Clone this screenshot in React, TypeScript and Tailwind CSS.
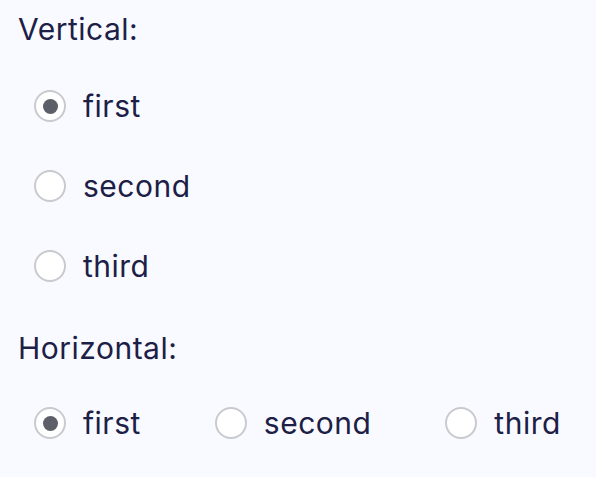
import { useState } from 'react'

const options = ['first', 'second', 'third']

function Radio({ label, checked, onSelect, className = '' }: { label: string; checked: boolean; onSelect: () => void; className?: string }) {
  return (
    <label className={`flex items-center cursor-pointer ${className}`} onClick={onSelect}>
      <span className="flex items-center justify-center w-[32px] h-[32px] rounded-full border-2 border-[#c9cacf] bg-white">
        {checked && <span className="w-[15px] h-[15px] rounded-full bg-[#5c5e68]" />}
      </span>
      <span className="ml-[17px]">{label}</span>
    </label>
  )
}

export default function App() {
  const [vertical, setVertical] = useState('first')
  const [horizontal, setHorizontal] = useState('first')

  return (
    <div
      className="min-h-[477px] bg-[#f9faff] pl-[18px] pt-[9px] text-[30px] tracking-[0.5px] text-[#1c2046]"
      style={{ fontFamily: 'Inter, "Noto Sans", sans-serif' }}
    >
      <div className="h-[40px] leading-[40px]">Vertical:</div>
      <div className="mt-[17px] flex flex-col">
        {options.map((o) => (
          <Radio key={o} label={o} checked={vertical === o} onSelect={() => setVertical(o)} className="h-[80px] pl-[16px]" />
        ))}
      </div>
      <div className="mt-[22px] h-[40px] leading-[40px]">Horizontal:</div>
      <div className="mt-[15px] flex h-[80px] pl-[16px] gap-[74px]">
        {options.map((o) => (
          <Radio key={o} label={o} checked={horizontal === o} onSelect={() => setHorizontal(o)} />
        ))}
      </div>
    </div>
  )
}
